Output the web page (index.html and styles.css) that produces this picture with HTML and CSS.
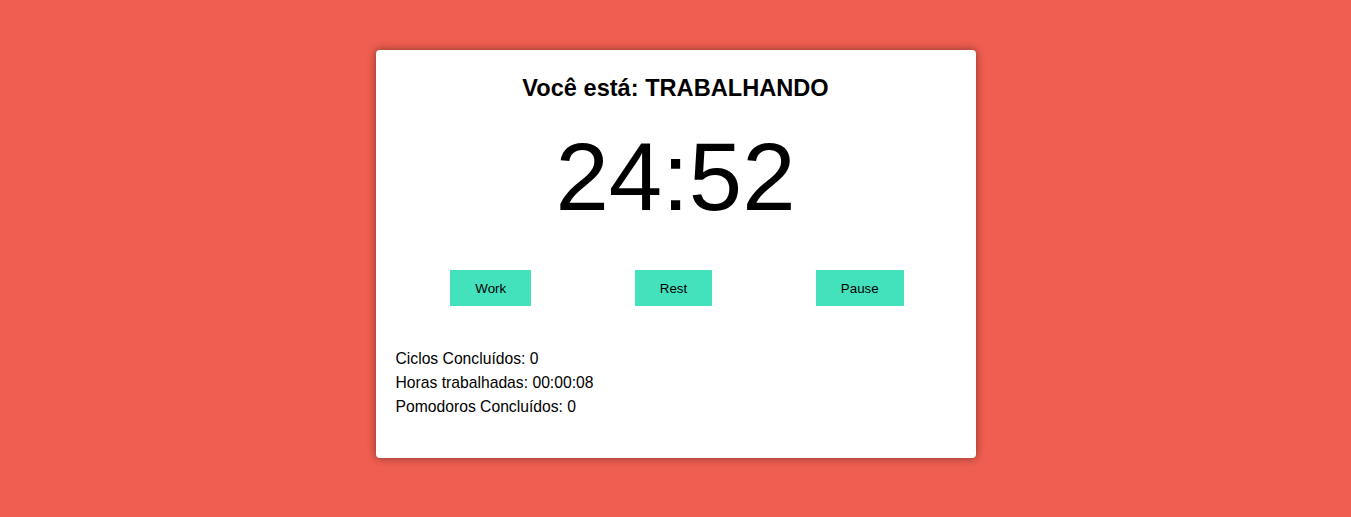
FILE: index.html
```html
<!DOCTYPE html>
<html lang="pt-BR">
<head>
<meta charset="utf-8">
<title>Pomodoro</title>
<link rel="stylesheet" href="styles.css">
</head>
<body>
<main class="card">
  <h1 class="status">Você está: TRABALHANDO</h1>
  <div class="timer">24:52</div>
  <div class="controls">
    <button class="btn">Work</button>
    <button class="btn">Rest</button>
    <button class="btn">Pause</button>
  </div>
  <div class="stats">
    <p>Ciclos Concluídos: 0</p>
    <p>Horas trabalhadas: 00:00:08</p>
    <p>Pomodoros Concluídos: 0</p>
  </div>
</main>
</body>
</html>
```

FILE: styles.css
```css
html, body {
  margin: 0;
  padding: 0;
}
body {
  background: #ef5e50;
  font-family: "Liberation Sans", Arial, sans-serif;
  color: #000;
  padding-top: 50px;
  height: 517px;
  box-sizing: border-box;
}
.card {
  width: 600px;
  box-sizing: border-box;
  margin: 0 auto;
  background: #fff;
  border-radius: 4px;
  box-shadow: 0 0 8px rgba(0, 0, 0, 0.45);
  padding: 20px 20px 39px;
}
.status {
  margin: 0;
  padding-top: 4px;
  font-size: 23.6px;
  font-weight: bold;
  text-align: center;
  line-height: 28px;
}
.timer {
  font-size: 96px;
  text-align: center;
  line-height: 110px;
  margin-top: 20px;
}
.controls {
  display: flex;
  justify-content: space-around;
  margin-top: 38px;
  padding-left: 3px;
}
.btn {
  background: #43e2bd;
  border: none;
  font-family: "Liberation Sans", Arial, sans-serif;
  font-size: 13.333px;
  color: #000;
  height: 36px;
  padding: 0 25px;
}
.stats {
  margin-top: 41px;
  font-size: 15.7px;
  line-height: 24px;
}
.stats p {
  margin: 0;
}
```
